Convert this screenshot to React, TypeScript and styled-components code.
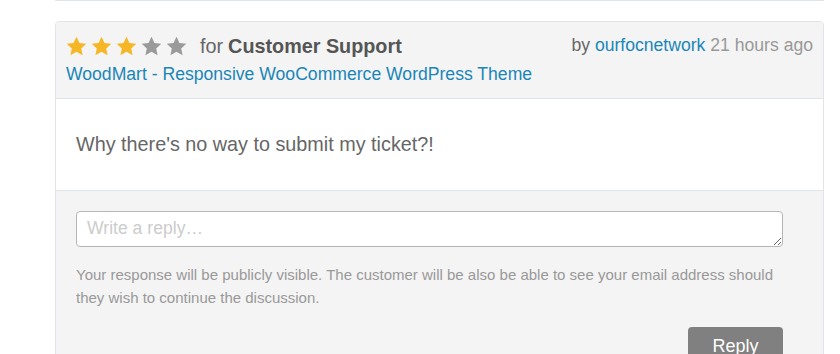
import styled, { createGlobalStyle } from 'styled-components'

const GlobalStyle = createGlobalStyle`
  body {
    margin: 0;
    background: #fff;
    font-family: "Liberation Sans", Arial, sans-serif;
  }
`

const Page = styled.div`
  width: 840px;
  height: 354px;
  overflow: hidden;
  padding-left: 55px;
  box-sizing: border-box;
`

const PrevCard = styled.div`
  width: 769px;
  height: 0;
  border: 1px solid #dfe5eb;
  border-top: none;
  border-radius: 0 0 4px 4px;
  box-sizing: border-box;
  margin-bottom: 20px;
`

const Card = styled.div`
  width: 769px;
  border: 1px solid #dfe5eb;
  border-radius: 4px;
  box-sizing: border-box;
  overflow: hidden;
`

const Header = styled.div`
  display: flex;
  justify-content: space-between;
  align-items: flex-start;
  background: #f4f4f4;
  padding: 12px 10px 12px 10px;
  border-bottom: 1px solid #dfe5eb;
`

const Rating = styled.div`
  display: flex;
  align-items: center;
  height: 24px;
  font-size: 19.8px;
  color: #666;
`

const Stars = styled.div`
  display: flex;
  gap: 4px;
  margin-right: 13px;
`

const ForLabel = styled.span`
  margin-right: 5px;
`

const Strong = styled.strong`
  color: #555;
  font-weight: bold;
`

const Link = styled.a`
  color: #1a86b8;
  text-decoration: none;
  font-size: 17.6px;
  line-height: 24px;
  display: block;
  margin-top: 4px;
`

const Meta = styled.div`
  font-size: 17.6px;
  line-height: 22px;
  color: #666;
`

const Muted = styled.span`
  color: #999;
`

const InlineLink = styled.a`
  color: #1a86b8;
  text-decoration: none;
`

const Body = styled.div`
  background: #fff;
  padding: 33px 20px 33px 20px;
  font-size: 19.8px;
  line-height: 25px;
  color: #666;
  border-bottom: 1px solid #dfe5eb;
`

const Footer = styled.div`
  background: #f4f4f4;
  padding: 20px 40px 40px 20px;
`

const ReplyBox = styled.textarea`
  display: block;
  width: 100%;
  height: 36px;
  box-sizing: border-box;
  border: 1px solid #b5b5b5;
  border-radius: 4px;
  padding: 6px 10px;
  font-family: "Liberation Sans", Arial, sans-serif;
  font-size: 17.6px;
  color: #555;
  background: #fff;
  resize: vertical;
  outline: none;

  &::placeholder {
    color: #ccc;
  }
`

const Note = styled.p`
  margin: 16px 0 0 0;
  font-size: 15px;
  line-height: 23px;
  color: #999;
`

const Actions = styled.div`
  display: flex;
  justify-content: flex-end;
  margin-top: 18px;
`

const ReplyButton = styled.button`
  width: 95px;
  height: 38px;
  border: none;
  border-radius: 4px;
  background: #808080;
  color: #fff;
  font-family: "Liberation Sans", Arial, sans-serif;
  font-size: 18px;
  cursor: pointer;
`

function Star({ filled }: { filled: boolean }) {
  return (
    <svg width="21" height="20" viewBox="0 0 24 23">
      <path
        d="M12 0.8l3.4 7.2 7.8 0.9-5.8 5.4 1.6 7.8L12 18.2l-7 3.9 1.6-7.8L0.8 8.9l7.8-0.9z"
        fill={filled ? '#f6b727' : '#9a9a9a'}
      />
    </svg>
  )
}

export default function App() {
  const rating = 3
  return (
    <>
      <GlobalStyle />
      <Page>
        <PrevCard />
        <Card>
          <Header>
            <div>
              <Rating>
                <Stars>
                  {[1, 2, 3, 4, 5].map((n) => (
                    <Star key={n} filled={n <= rating} />
                  ))}
                </Stars>
                <ForLabel>for</ForLabel>
                <Strong>Customer Support</Strong>
              </Rating>
              <Link href="#">WoodMart - Responsive WooCommerce WordPress Theme</Link>
            </div>
            <Meta>
              by <InlineLink href="#">ourfocnetwork</InlineLink> <Muted>21 hours ago</Muted>
            </Meta>
          </Header>
          <Body>Why there's no way to submit my ticket?!</Body>
          <Footer>
            <ReplyBox placeholder="Write a reply…" />
            <Note>
              Your response will be publicly visible. The customer will be also be able to see your email address should they wish to continue the discussion.
            </Note>
            <Actions>
              <ReplyButton>Reply</ReplyButton>
            </Actions>
          </Footer>
        </Card>
      </Page>
    </>
  )
}
